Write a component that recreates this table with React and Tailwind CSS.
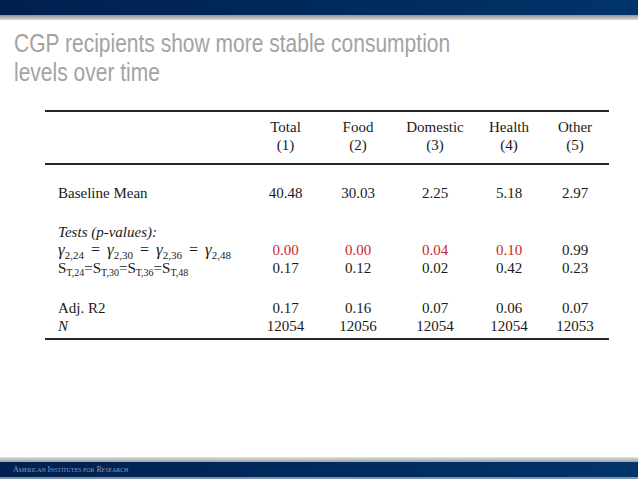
import React from "react";

// column widths measured from the slide: label, then five outcome columns
const cols = "grid grid-cols-[203px_75px_70px_84px_64px_68px]";

const heads = [
  ["Total", "(1)"],
  ["Food", "(2)"],
  ["Domestic", "(3)"],
  ["Health", "(4)"],
  ["Other", "(5)"],
];

const red = "text-[#c4282c]";

function Rule() {
  return <div className="h-[2px] bg-[#262626]" />;
}

function Row({ label, values, className = "" }) {
  return (
    <div className={`${cols} h-[18px] leading-[18px] ${className}`}>
      <div className="pl-[13px] whitespace-nowrap">{label}</div>
      {values.map((v, i) => (
        <div key={i} className={`text-center ${v.red ? red : ""}`}>
          {v.text}
        </div>
      ))}
    </div>
  );
}

const plain = (arr) => arr.map((t) => ({ text: t }));

function Gamma({ sub }) {
  return (
    <>
      <i className="text-[17px]">γ</i>
      <sub className="text-[11px] leading-none align-[-1px]">{sub}</sub>
    </>
  );
}

const Eq = () => <span className="px-[7px]">=</span>;

function S({ sub, last }) {
  return (
    <>
      S
      <sub className="text-[10px] leading-none align-[0px]">{sub}</sub>
      {last ? null : "="}
    </>
  );
}

export default function App() {
  return (
    <div className="w-[638px] h-[479px] bg-white flex flex-col overflow-hidden">
      {/* top band */}
      <div className="h-[15px] bg-gradient-to-r from-[#00204f] via-[#002a5c] to-[#00346a]" />
      <div className="h-[5px] bg-gradient-to-b from-[#8794a3] via-[#b3b6b9] to-[#d9dadb]" />

      <h1 className="mt-[9px] ml-[14px] w-[560px] origin-left scale-x-[0.84] whitespace-nowrap font-['Liberation_Sans',Arial,sans-serif] text-[25px] leading-[29px] text-[#a3a3a3]">
        CGP recipients show more stable consumption
        <br />
        levels over time
      </h1>

      {/* regression table */}
      <div className="mt-[23px] ml-[45px] w-[564px] font-['Liberation_Serif','Times_New_Roman',serif] text-[15px] text-[#1a1a1a]">
        <Rule />
        <div className={`${cols} pt-[6px] pb-[9px] leading-[18px]`}>
          <div />
          {heads.map(([a, b]) => (
            <div key={b} className="text-center">
              <div>{a}</div>
              <div>{b}</div>
            </div>
          ))}
        </div>
        <Rule />

        <Row
          className="mt-[19px]"
          label="Baseline Mean"
          values={plain(["40.48", "30.03", "2.25", "5.18", "2.97"])}
        />

        <Row
          className="mt-[21px]"
          label={<i>Tests (p-values):</i>}
          values={plain(["", "", "", "", ""])}
        />
        <Row
          label={
            <span className="text-[16px]">
              <Gamma sub="2,24" />
              <Eq />
              <Gamma sub="2,30" />
              <Eq />
              <Gamma sub="2,36" />
              <Eq />
              <Gamma sub="2,48" />
            </span>
          }
          values={[
            { text: "0.00", red: true },
            { text: "0.00", red: true },
            { text: "0.04", red: true },
            { text: "0.10", red: true },
            { text: "0.99" },
          ]}
        />
        <Row
          label={
            <span className="text-[15px]">
              <S sub="T,24" />
              <S sub="T,30" />
              <S sub="T,36" />
              <S sub="T,48" last />
            </span>
          }
          values={plain(["0.17", "0.12", "0.02", "0.42", "0.23"])}
        />

        <Row
          className="mt-[22px]"
          label="Adj. R2"
          values={plain(["0.17", "0.16", "0.07", "0.06", "0.07"])}
        />
        <Row
          label={<i>N</i>}
          values={plain(["12054", "12056", "12054", "12054", "12053"])}
        />
        <div className="mt-[3px]">
          <Rule />
        </div>
      </div>

      <div className="flex-1" />

      {/* footer band */}
      <div className="h-[5px] bg-gradient-to-b from-[#e2e3e4] via-[#bcbfc2] to-[#9ea5ad]" />
      <div className="h-[15px] bg-gradient-to-r from-[#00204f] via-[#002a5c] to-[#00346a] flex items-center pl-[13px]">
        <span className="font-['Liberation_Serif',serif] text-[8px] leading-none text-[#8a9ab4] [font-variant:small-caps] tracking-[-0.1px]">
          American Institutes for Research
        </span>
      </div>
      <div className="h-[2px] bg-[#7d92ac]" />
    </div>
  );
}
